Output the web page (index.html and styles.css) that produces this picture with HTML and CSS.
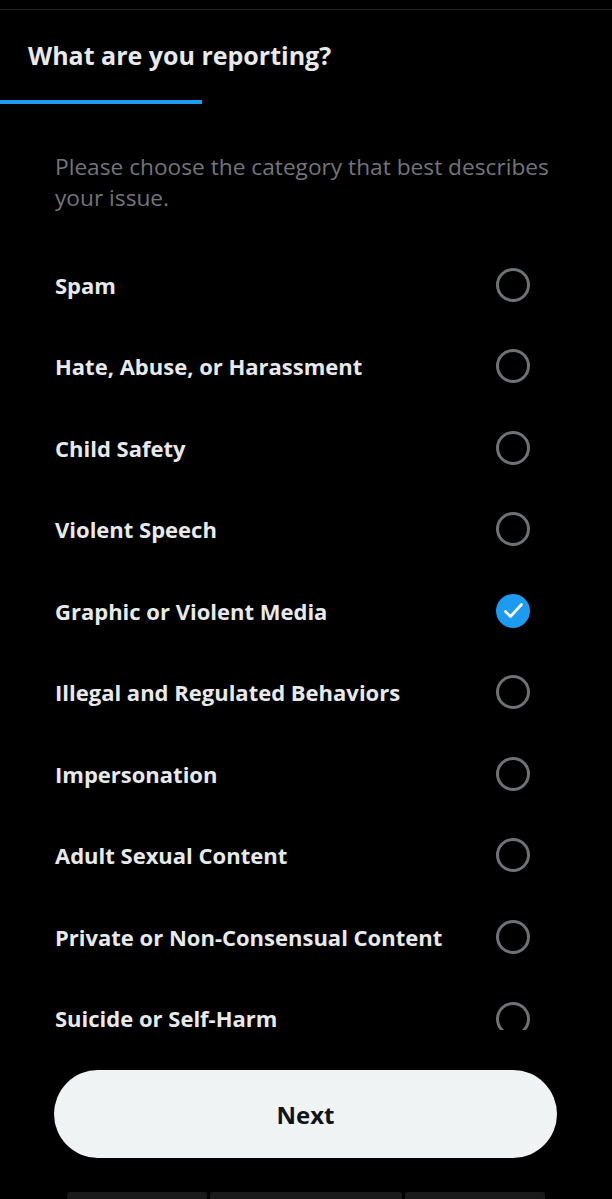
FILE: index.html
```html
<!DOCTYPE html>
<html lang="en">
<head>
    <meta charset="UTF-8">
    <meta name="viewport" content="width=device-width, initial-scale=1.0">
    <title>Report</title>
    <link rel="stylesheet" href="styles.css">
</head>
<body>
    <div class="topline"></div>

    <div class="header">
        <h1>What are you reporting?</h1>
        <div class="tab-indicator"></div>
    </div>

    <p class="intro">Please choose the category that best describes your issue.</p>

    <ul class="options">
        <li><span>Spam</span><i class="radio"></i></li>
        <li><span>Hate, Abuse, or Harassment</span><i class="radio"></i></li>
        <li><span>Child Safety</span><i class="radio"></i></li>
        <li><span>Violent Speech</span><i class="radio"></i></li>
        <li>
            <span>Graphic or Violent Media</span>
            <i class="radio checked">
                <svg viewBox="0 0 34 34" width="34" height="34">
                    <path d="M9.5 17.5 L14.5 22.5 L25.5 10.5" fill="none" stroke="#fff" stroke-width="2.6" stroke-linecap="round" stroke-linejoin="round"/>
                </svg>
            </i>
        </li>
        <li><span>Illegal and Regulated Behaviors</span><i class="radio"></i></li>
        <li><span>Impersonation</span><i class="radio"></i></li>
        <li><span>Adult Sexual Content</span><i class="radio"></i></li>
        <li><span>Private or Non-Consensual Content</span><i class="radio"></i></li>
        <li>
            <span>Suicide or Self-Harm</span>
            <span class="radio-clip"><i class="radio"></i></span>
        </li>
    </ul>

    <div class="footer">
        <button type="button">Next</button>
    </div>

    <div class="navbar">
        <span></span>
        <span></span>
        <span></span>
    </div>
</body>
</html>
```

FILE: styles.css
```css
body {
    margin: 0;
    padding: 0;
    width: 612px;
    height: 1199px;
    overflow: hidden;
    background-color: #000;
    font-family: "Open Sans", "Liberation Sans", sans-serif;
    color: #e7e9ea;
}

.topline {
    height: 9px;
    border-bottom: 1px solid #1c1e20;
}

.header {
    padding-top: 30px;
}

.header h1 {
    margin: 0;
    padding-left: 28px;
    font-size: 25px;
    line-height: 30px;
    font-weight: 700;
    color: #e7e9ea;
}

.tab-indicator {
    margin-top: 30px;
    width: 202px;
    height: 4px;
    background-color: #1d9bf0;
}

.intro {
    margin: 0;
    padding: 47px 40px 0 55px;
    font-size: 22.7px;
    line-height: 31px;
    color: #71767b;
}

.options {
    list-style: none;
    margin: 31px 0 0 0;
    padding: 0;
}

.options li {
    display: flex;
    align-items: center;
    justify-content: space-between;
    height: 81.5px;
    padding: 0 82px 0 55px;
    font-size: 22px;
    line-height: 20px;
    font-weight: 700;
    color: #e7e9ea;
}

.radio {
    display: block;
    width: 34px;
    height: 34px;
    box-sizing: border-box;
    border: 3px solid #6e7275;
    border-radius: 50%;
}

.radio.checked {
    border: none;
    background-color: #1d9bf0;
}

.radio svg {
    display: block;
}

/* the last radio is cut by the bottom of the scroll area */
.radio-clip {
    display: block;
    height: 28px;
    margin-bottom: 4px;
    overflow: hidden;
}

.footer {
    padding: 11px 55px 0 54px;
}

.footer button {
    display: block;
    width: 100%;
    height: 88px;
    border: none;
    border-radius: 44px;
    background-color: #eff3f4;
    color: #0f1419;
    font-family: "Open Sans", "Liberation Sans", sans-serif;
    font-size: 24px;
    font-weight: 700;
}

.navbar {
    display: flex;
    gap: 3px;
    margin-top: 34px;
    padding-left: 67px;
}

.navbar span {
    height: 7px;
    background-color: #1a1a1a;
    border-radius: 3px 3px 0 0;
}

.navbar span:nth-child(1) { width: 140px; }
.navbar span:nth-child(2) { width: 192px; }
.navbar span:nth-child(3) { width: 140px; }
```
